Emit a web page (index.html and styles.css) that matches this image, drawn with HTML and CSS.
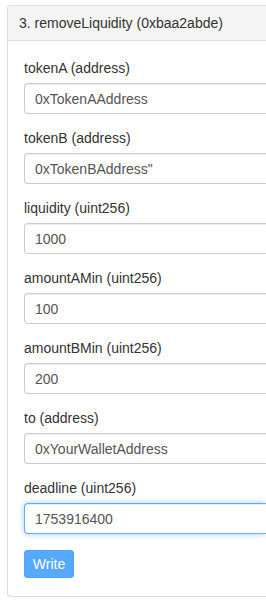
FILE: index.html
```html
<!DOCTYPE html>
<html lang="en">
<head>
    <meta charset="UTF-8">
    <meta name="viewport" content="width=device-width, initial-scale=1.0">
    <title>removeLiquidity</title>
    <link rel="stylesheet" href="styles.css">
</head>
<body>
    <div class="panel">
        <div class="panel-heading">3. removeLiquidity (0xbaa2abde)</div>
        <div class="panel-body">
            <div class="form-group">
                <label>tokenA (address)</label>
                <input class="form-control" type="text" value="0xTokenAAddress">
            </div>
            <div class="form-group">
                <label>tokenB (address)</label>
                <input class="form-control" type="text" value='0xTokenBAddress"'>
            </div>
            <div class="form-group">
                <label>liquidity (uint256)</label>
                <input class="form-control" type="text" value="1000">
            </div>
            <div class="form-group">
                <label>amountAMin (uint256)</label>
                <input class="form-control" type="text" value="100">
            </div>
            <div class="form-group">
                <label>amountBMin (uint256)</label>
                <input class="form-control" type="text" value="200">
            </div>
            <div class="form-group">
                <label>to (address)</label>
                <input class="form-control" type="text" value="0xYourWalletAddress">
            </div>
            <div class="form-group">
                <label>deadline (uint256)</label>
                <input class="form-control focused" type="text" value="1753916400">
            </div>
            <button class="btn-write">Write</button>
        </div>
    </div>
</body>
</html>
```

FILE: styles.css
```css
* {
    margin: 0;
    padding: 0;
    box-sizing: border-box;
}

body {
    font-family: 'Liberation Sans', Arial, sans-serif;
    font-size: 14px;
    line-height: 20px;
    color: #333;
    background: #fff;
    padding: 5px 0 0 7px;
    overflow: hidden;
    width: 266px;
    height: 604px;
}

/* the panel is cut off at the right edge of the window */
.panel {
    width: 100%;
    border: 1px solid #ddd;
    border-right: none;
    border-radius: 4px 0 0 4px;
}

.panel-heading {
    background: #f5f5f5;
    border-bottom: 1px solid #ddd;
    padding: 7px 11px;
    height: 35px;
    border-radius: 3px 0 0 0;
}

.panel-body {
    padding: 17px 0 18px 16px;
}

.form-group {
    display: flex;
    flex-direction: column;
    margin-bottom: 14px;
}

.form-group label {
    display: block;
    margin-bottom: 5px;
}

.form-control {
    height: 31px;
    width: 100%;
    border: 1px solid #ccc;
    border-right: none;
    border-radius: 4px 0 0 4px;
    padding: 0 10px;
    font-family: inherit;
    font-size: 14px;
    color: #555;
    background: #fff;
    box-shadow: inset 0 1px 1px rgba(0, 0, 0, 0.075);
    outline: none;
}

.form-control.focused {
    border-color: #66afe9;
    box-shadow: inset 0 1px 1px rgba(0, 0, 0, 0.075), 0 0 6px rgba(102, 175, 233, 0.6);
}

.btn-write {
    margin-top: 2px;
    width: 50px;
    height: 28px;
    border: 1px solid #4ea4ff;
    border-radius: 3px;
    background: #57a8ff;
    color: #fff;
    font-family: inherit;
    font-size: 14px;
    cursor: pointer;
}
```
